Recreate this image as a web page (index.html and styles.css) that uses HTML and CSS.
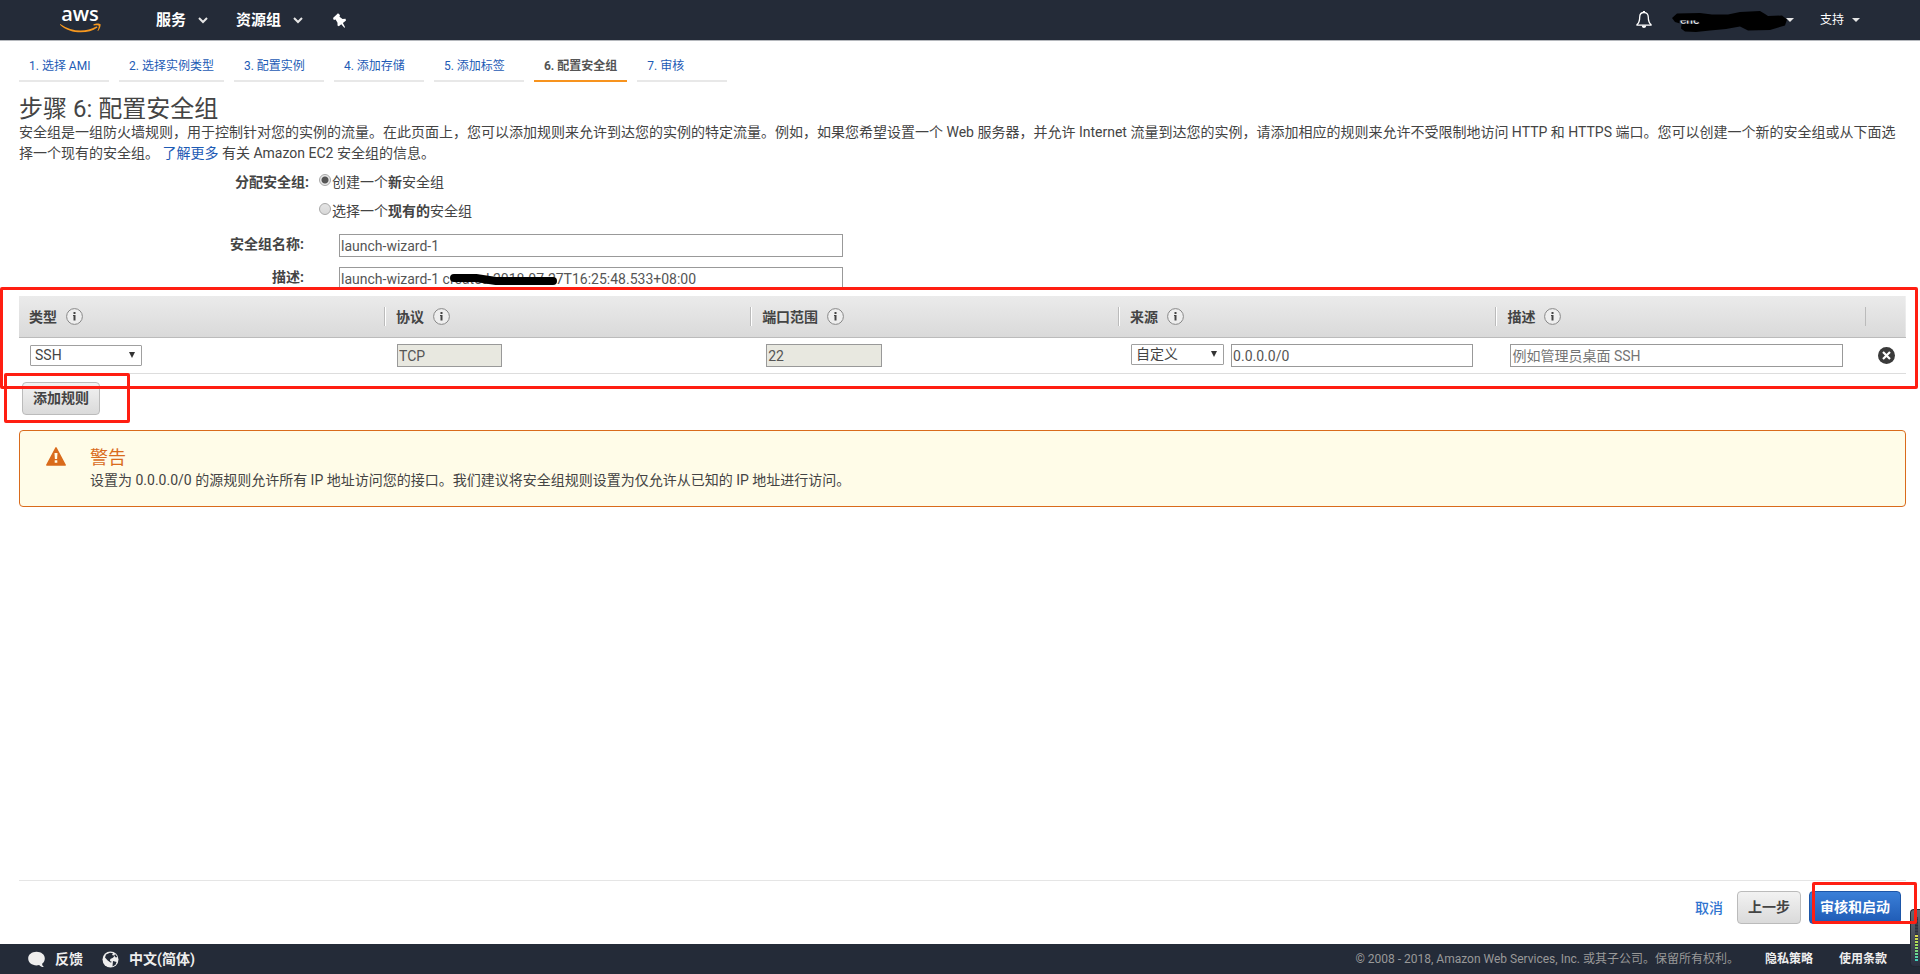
FILE: index.html
```html
<!DOCTYPE html>
<html lang="zh-CN">
<head>
<meta charset="utf-8">
<title>配置安全组</title>
<link rel="stylesheet" href="styles.css">
</head>
<body>
<header class="topbar">
  <div class="topbar-left">
    <a class="logo" href="#" aria-label="aws">
      <svg width="42" height="40" viewBox="0 -6 42 40">
        <text class="logo-word" x="20" y="15" text-anchor="middle">aws</text>
        <path d="M.6 18.2C11 25.600 25.500 26.600 36.200 20.600c1-.5 1.700.4.9 1.100C28 28.600 9.500 28 .2 18.900c-.4-.4 0-1 .4-.7z" fill="#f7981f"/>
        <path d="M33.500 18.500c2.200-1.500 6.200-1.200 6.900-.4.6.9-.2 5-2.300 6.800-.4.3-.7.1-.5-.3.5-1.200 1.500-4 1.100-4.900-.5-.7-3.500-.4-4.800-.3-.5 0-.7-.4-.4-.9z" fill="#f7981f"/>
      </svg>
    </a>
    <button class="menu" type="button">服务
      <svg width="10" height="7" viewBox="0 0 10 7"><path d="M1 1l4 4 4-4" fill="none" stroke="#e6e6e6" stroke-width="2"/></svg>
    </button>
    <button class="menu" type="button">资源组
      <svg width="10" height="7" viewBox="0 0 10 7"><path d="M1 1l4 4 4-4" fill="none" stroke="#e6e6e6" stroke-width="2"/></svg>
    </button>
    <button class="icon-button" type="button" aria-label="固定">
      <svg width="13" height="15" viewBox="0 0 13 15"><path d="M0 5L5 .3l2 1.700-.5 1.700L9.500 6l3-.2.5 1.600-3.100 2.600 2.200 4.200-.8.500-3-3.400-2.500 1.900-1.300-.6V9.800L2.600 6.600.8 6.900z" fill="#fff"/></svg>
    </button>
  </div>
  <div class="topbar-right">
    <button class="icon-button" type="button" aria-label="通知">
      <svg width="16" height="18" viewBox="0 0 16 18"><path d="M8 1.500c-3 0-4.300 2-4.300 4.700 0 4-.8 5.800-2.700 7.300v.6h14v-.6c-1.900-1.500-2.700-3.300-2.700-7.300C12.300 3.500 11 1.500 8 1.500z" fill="none" stroke="#fff" stroke-width="1.300"/><path d="M7 0h2v2H7zM5.800 14.500h4.400C10 16.300 9.200 17 8 17s-2-.7-2.200-2.500z" fill="#fff"/></svg>
    </button>
    <button class="menu account" type="button" aria-label="账户"><span class="account-name">ene</span>
      <svg class="scribble" width="116" height="24" viewBox="0 0 116 24"><path fill-rule="evenodd" d="M5 3.500L28 3l12 1.500h16L68 2l20-1 5 3 3 2 14-.5 5 4-2 6-10 3-5 1.500-22 .5-8-4-14 2.500L38 20.500 24 22l-11-.5-4-3 .5-4.500L3 12 0 8zM7.500 10.500v3l20 .5v-2l-5-1.500z"/></svg>
      <span class="caret"></span>
    </button>
    <button class="menu support" type="button">支持<span class="caret"></span></button>
  </div>
</header>

<main class="wizard">
  <nav class="steps">
    <a class="step" href="#">1. 选择 AMI</a>
    <a class="step" href="#">2. 选择实例类型</a>
    <a class="step" href="#">3. 配置实例</a>
    <a class="step" href="#">4. 添加存储</a>
    <a class="step" href="#">5. 添加标签</a>
    <a class="step current" href="#" aria-current="step">6. 配置安全组</a>
    <a class="step" href="#">7. 审核</a>
  </nav>

  <section class="intro">
    <h1>步骤 6: 配置安全组</h1>
    <p>安全组是一组防火墙规则，用于控制针对您的实例的流量。在此页面上，您可以添加规则来允许到达您的实例的特定流量。例如，如果您希望设置一个 Web 服务器，并允许 Internet 流量到达您的实例，请添加相应的规则来允许不受限制地访问 HTTP 和 HTTPS 端口。您可以创建一个新的安全组或从下面选择一个现有的安全组。 <a href="#">了解更多</a> 有关 Amazon EC2 安全组的信息。</p>
  </section>

  <form class="group-form">
    <div class="assign" role="radiogroup" aria-labelledby="assign-label">
      <span class="form-label" id="assign-label">分配安全组:</span>
      <div class="choices">
        <label class="choice"><input type="radio" name="assign" checked><span>创建一个<b>新</b>安全组</span></label>
        <label class="choice"><input type="radio" name="assign"><span>选择一个<b>现有的</b>安全组</span></label>
      </div>
    </div>
    <div class="field">
      <label class="form-label" for="group-name">安全组名称:</label>
      <input class="text-input" id="group-name" type="text" value="launch-wizard-1">
    </div>
    <div class="field">
      <label class="form-label" for="group-desc">描述:</label>
      <div class="marked-input">
        <input class="text-input" id="group-desc" type="text" value="launch-wizard-1 created 2018-07-27T16:25:48.533+08:00">
        <svg class="strike" width="108" height="13" viewBox="0 0 108 13"><path d="M4 5h22l20 3h57" fill="none" stroke="#000" stroke-width="8" stroke-linecap="round" stroke-linejoin="round"/></svg>
      </div>
    </div>
  </form>

  <section class="rules">
    <table class="rules-table">
      <colgroup><col class="c-type"><col class="c-proto"><col class="c-port"><col class="c-source"><col class="c-desc"><col></colgroup>
      <thead>
        <tr>
          <th><div class="head">类型<button class="info" type="button" aria-label="类型信息"><svg width="17" height="17" viewBox="0 0 17 17"><circle cx="8.500" cy="8.500" r="7.900" fill="#eee" stroke="#888"/><path d="M7.500 4h2v2h-2zM7 7h2.500v5.500h-2V8H7z" fill="#444"/></svg></button></div></th>
          <th><div class="head">协议<button class="info" type="button" aria-label="协议信息"><svg width="17" height="17" viewBox="0 0 17 17"><circle cx="8.500" cy="8.500" r="7.900" fill="#eee" stroke="#888"/><path d="M7.500 4h2v2h-2zM7 7h2.500v5.500h-2V8H7z" fill="#444"/></svg></button></div></th>
          <th><div class="head">端口范围<button class="info" type="button" aria-label="端口范围信息"><svg width="17" height="17" viewBox="0 0 17 17"><circle cx="8.500" cy="8.500" r="7.900" fill="#eee" stroke="#888"/><path d="M7.500 4h2v2h-2zM7 7h2.500v5.500h-2V8H7z" fill="#444"/></svg></button></div></th>
          <th><div class="head">来源<button class="info" type="button" aria-label="来源信息"><svg width="17" height="17" viewBox="0 0 17 17"><circle cx="8.500" cy="8.500" r="7.900" fill="#eee" stroke="#888"/><path d="M7.500 4h2v2h-2zM7 7h2.500v5.500h-2V8H7z" fill="#444"/></svg></button></div></th>
          <th><div class="head">描述<button class="info" type="button" aria-label="描述信息"><svg width="17" height="17" viewBox="0 0 17 17"><circle cx="8.500" cy="8.500" r="7.900" fill="#eee" stroke="#888"/><path d="M7.500 4h2v2h-2zM7 7h2.500v5.500h-2V8H7z" fill="#444"/></svg></button></div></th>
          <th><div class="head"></div></th>
        </tr>
      </thead>
      <tbody>
        <tr>
          <td><span class="select type-select"><select aria-label="类型"><option>SSH</option></select></span></td>
          <td><input class="text-input proto" type="text" value="TCP" aria-label="协议" disabled></td>
          <td class="port-cell"><input class="text-input port" type="text" value="22" aria-label="端口范围" disabled></td>
          <td><div class="source"><span class="select source-select"><select aria-label="来源"><option>自定义</option></select></span><input class="text-input" type="text" value="0.0.0.0/0" aria-label="来源地址"></div></td>
          <td class="desc-cell"><input class="text-input desc" type="text" placeholder="例如管理员桌面 SSH" aria-label="描述"></td>
          <td><button class="remove" type="button" aria-label="删除"><svg width="17" height="17" viewBox="0 0 17 17"><circle cx="8.500" cy="8.500" r="8.500" fill="#3a3a3a"/><path d="M5 5l7 7M12 5l-7 7" stroke="#fff" stroke-width="2.200"/></svg></button></td>
        </tr>
      </tbody>
    </table>
    <div class="outline outline-table"></div>
  </section>

  <div class="add-row">
    <button class="btn" type="button">添加规则</button>
    <div class="outline outline-add"></div>
  </div>

  <section class="alert" role="alert">
    <svg class="alert-icon" width="20" height="19" viewBox="0 0 20 19"><path d="M10 .8L19.200 18H.8z" fill="#d96b1c" stroke="#d96b1c" stroke-width="1.500" stroke-linejoin="round"/><path d="M8.500 6h3l-.4 6H8.900zM8.700 13.300h2.600v2.500H8.700z" fill="#fffce8"/></svg>
    <div>
      <h2>警告</h2>
      <p>设置为 0.0.0.0/0 的源规则允许所有 IP 地址访问您的接口。我们建议将安全组规则设置为仅允许从已知的 IP 地址进行访问。</p>
    </div>
  </section>

  <div class="actions">
    <a class="cancel" href="#">取消</a>
    <button class="btn" type="button">上一步</button>
    <div class="primary-wrap">
      <button class="btn primary" type="button">审核和启动</button>
      <div class="outline outline-primary"></div>
    </div>
  </div>
</main>

<footer class="footer">
  <div class="footer-left">
    <a class="footer-link" href="#"><svg width="17" height="17" viewBox="0 0 17 17"><path d="M8.500.8c4.700 0 8.300 2.800 8.300 6.700 0 2.200-1 4-2.700 5.200.1 1.500.8 2.600 2 3.400-2.200.1-3.900-.6-5-2-.8.200-1.700.3-2.600.3-4.700 0-8.300-3-8.300-6.900S3.800.8 8.500.8z" fill="#eee"/></svg>反馈</a>
    <a class="footer-link" href="#"><svg width="17" height="17" viewBox="0 0 17 17"><circle cx="8.500" cy="8.500" r="8" fill="#eee"/><path d="M4 3.500L8 1.800l3 .4-1 1.800 2.500.8-1.500 2-2.700 1.200-.3 2 2 1-1.500.6-2.800-2L3 6.500zM11 10l3.500 1-1 2.800-3 1.700.2-2.500zM13 3l2.500 3-1.700.5-1.500-1.700z" fill="#242b38"/></svg>中文(简体)</a>
  </div>
  <div class="footer-right">
    <span class="copyright">© 2008 - 2018, Amazon Web Services, Inc. 或其子公司。保留所有权利。</span>
    <a class="legal" href="#">隐私策略</a>
    <a class="legal" href="#">使用条款</a>
  </div>
</footer>
<div class="meter"><div class="meter-bars"></div></div>
</body>
</html>
```
FILE: styles.css
```css
* { box-sizing: border-box; }

body {
  margin: 0;
  min-height: 100vh;
  display: flex;
  flex-direction: column;
  background: #fff;
  color: #444;
  font-family: Roboto, "Noto Sans CJK SC", sans-serif;
  font-size: 14px;
  line-height: 20px;
}

button, input, select { font: inherit; color: inherit; }
button { cursor: pointer; }
svg { display: block; flex: none; }
a { color: #1d5bb5; text-decoration: none; }
h1, h2, p { margin: 0; font-weight: 400; }

/* Top bar */
.topbar {
  display: flex;
  justify-content: space-between;
  height: 41px;
  padding: 0 60px;
  background: #242b38;
  border-bottom: 1px solid #b5b8bd;
}
.topbar-left, .topbar-right { display: flex; align-items: center; }
.logo { margin-right: 54px; }
.logo-word { font: 600 20px "Open Sans", sans-serif; fill: #fff; }
.menu {
  display: flex;
  align-items: center;
  gap: 12px;
  margin: 0 28px 0 0;
  padding: 0;
  border: 0;
  background: none;
  color: #fff;
  font-size: 15px;
  font-weight: 700;
}
.icon-button { padding: 0; border: 0; background: none; margin-left: 2px; }
.account { position: relative; width: 122px; margin: 0 26px 0 20px; justify-content: flex-end; font-size: 12px; font-weight: 400; }
.account-name { margin-right: auto; padding-left: 8px; }
.scribble { position: absolute; left: 0; top: 0; }
.support { margin: 0; gap: 8px; font-size: 12px; font-weight: 400; }
.caret { border: 4px solid transparent; border-top-color: #e6e6e6; border-bottom: 0; }

/* Wizard */
.wizard { flex: 1; display: flex; flex-direction: column; }
.steps { display: flex; gap: 10px; padding: 14px 14px 0 19px; }
.step {
  min-width: 90px;
  padding: 0 10px 3px;
  border-bottom: 2px solid #e8e8e8;
  font-size: 12px;
  line-height: 22px;
}
.step.current { border-color: #f7931e; color: #555; font-weight: 700; }

.intro { padding: 14px 14px 0 19px; line-height: 21px; }
.intro h1 { font-size: 24px; line-height: 26px; }

.group-form { padding: 8px 14px 0 19px; }
.form-label { font-weight: 700; text-align: right; }
.assign { display: grid; grid-template-columns: 290px 1fr; column-gap: 10px; margin-bottom: 13px; }
.choices { display: flex; flex-direction: column; gap: 9px; }
.choice { display: flex; align-items: flex-start; gap: 1px; }
.choice input {
  appearance: none;
  width: 12px;
  height: 12px;
  margin: 2px 0 0;
  border: 1px solid #a8a8a8;
  border-radius: 50%;
  background: linear-gradient(#e4e4e4, #d8d8d8);
}
.choice input:checked { background: radial-gradient(circle, #555 0 3px, #e8e8e8 4px); }
.field {
  display: grid;
  grid-template-columns: 285px minmax(0, 504px);
  column-gap: 35px;
  margin-bottom: 10px;
}
.field:last-child { margin-bottom: 0; }
.text-input {
  display: block;
  width: 100%;
  height: 23px;
  padding: 0 1px;
  border: 1px solid #999;
  border-radius: 0;
  background: #fff;
  color: #555;
}
.text-input:disabled { background: #e8e8e0; }
.text-input::placeholder { color: #757575; opacity: 1; }
.marked-input { position: relative; }
.strike { position: absolute; left: 111px; top: 6px; }

/* Rules */
.rules { position: relative; margin-top: -3px; padding: 9px 14px 0 19px; background: #fff; }
.rules-table { width: 100%; table-layout: fixed; border-collapse: separate; border-spacing: 0; }
.c-type, .c-proto { width: 19.4%; }
.c-port { width: 19.5%; }
.c-source { width: 20%; }
.c-desc { width: 19.6%; }
.rules-table thead tr { background: linear-gradient(#ebebeb, #d9d9d9); }
.rules-table th { height: 42px; padding: 0; border-bottom: 1px solid #bbb; text-align: left; }
.head {
  display: flex;
  align-items: center;
  gap: 9px;
  height: 19px;
  padding-left: 10px;
  border-left: 1px solid #fff;
  box-shadow: -1px 0 #bbb;
}
th:first-child .head { border: 0; box-shadow: none; }
th:last-child .head { border: 0; }
.info { padding: 0; border: 0; background: none; }
.rules-table td { height: 36px; padding: 0 0 0 12px; border-bottom: 1px solid #ddd; }
.rules-table td:first-child { padding-left: 11px; }
.select { display: block; position: relative; height: 21px; }
.select::after {
  content: "";
  position: absolute;
  right: 7px;
  top: 7px;
  border: 3px solid transparent;
  border-top: 6px solid #333;
  border-bottom: 0;
  pointer-events: none;
}
.select select {
  appearance: none;
  display: block;
  width: 100%;
  height: 21px;
  padding: 0 4px;
  border: 1px solid #a0a0a0;
  border-radius: 1px;
  background: #fff;
  line-height: 19px;
}
.type-select { width: 112px; }
.proto { width: 105px; }
.rules-table .port-cell { padding-left: 15px; }
.port { width: 116px; }
.source { display: flex; align-items: flex-start; gap: 7px; padding-right: 23px; }
.source-select { width: 93px; flex: none; }
.rules-table .desc-cell { padding: 0 23px 0 14px; }
.remove { padding: 0; border: 0; background: none; display: block; }

.add-row { position: relative; padding: 8px 14px 0 22px; }
.btn {
  display: block;
  height: 33px;
  padding: 0 10px 2px;
  border: 1px solid #bbb;
  border-radius: 4px;
  background: linear-gradient(#f2f2f2, #dadada);
  font-weight: 700;
}

.alert {
  display: flex;
  margin: 15px 14px 0 19px;
  padding: 16px 26px 15px;
  gap: 24px;
  border: 1px solid #d96b1c;
  border-radius: 4px;
  background: #fffce8;
  line-height: 22px;
}
.alert h2 { color: #d96b1c; font-size: 18px; line-height: 22px; }

.actions {
  display: flex;
  align-items: center;
  justify-content: flex-end;
  margin: auto 14px 0 19px;
  padding: 10px 5px 20px;
  border-top: 1px solid #e5e5e5;
}
.cancel { margin-right: 14px; color: #2f74d0; font-weight: 500; }
.primary-wrap { position: relative; margin-left: 8px; }
.primary { border-color: #1d56a8; background: linear-gradient(#3a7fd8, #1f5bb5); color: #fff; }

.outline { position: absolute; border: 3px solid #ff1e12; border-radius: 2px; pointer-events: none; }
.outline-table { inset: 0 2px -15px 0; z-index: 1; }
.outline-add { left: 4px; top: -1px; width: 126px; height: 50px; }
.outline-primary { inset: -9px -16px 0 3px; z-index: 2; }

/* Footer */
.footer {
  display: flex;
  align-items: center;
  justify-content: space-between;
  height: 30px;
  padding: 0 33px 0 28px;
  background: #242b38;
}
.footer-left, .footer-right { display: flex; align-items: center; }
.footer-left { gap: 19px; }
.footer-right { gap: 26px; font-size: 12px; }
.footer-link { display: flex; align-items: center; gap: 10px; color: #eee; font-weight: 700; }
.copyright { color: #999; }
.legal { color: #eee; font-weight: 700; }

.meter {
  position: fixed;
  right: 0;
  bottom: 7px;
  width: 10px;
  height: 58px;
  padding: 7px 2px 5px 4px;
  border: 1px solid #222833;
  border-right: 0;
  border-radius: 4px 0 0 4px;
  background: linear-gradient(#666b74, #2b3040);
}
.meter-bars {
  height: 100%;
  background:
    repeating-linear-gradient(transparent 0 2px, #2b3040 2px 3px),
    linear-gradient(#3a3e48 0 38%, #e8d84a 40%, #9ddb5a 65%, #3fd0c0);
}
```
